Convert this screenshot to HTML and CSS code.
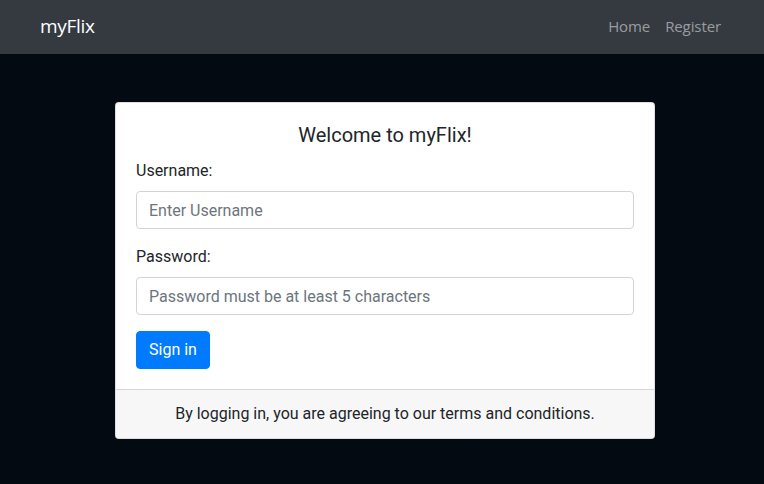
FILE: index.html
```html
<!DOCTYPE html>
<html lang="en">
<head>
<meta charset="utf-8">
<title>myFlix</title>
<link rel="stylesheet" href="styles.css">
</head>
<body>
<nav class="navbar">
  <a class="brand" href="#">myFlix</a>
  <div class="nav-links">
    <a href="#">Home</a>
    <a href="#">Register</a>
  </div>
</nav>
<main class="main">
  <div class="card">
    <form class="card-body">
      <h5 class="card-title">Welcome to myFlix!</h5>
      <div class="form-group">
        <label for="u">Username:</label>
        <input id="u" class="form-control" type="text" placeholder="Enter Username">
      </div>
      <div class="form-group">
        <label for="p">Password:</label>
        <input id="p" class="form-control" type="password" placeholder="Password must be at least 5 characters">
      </div>
      <button class="btn" type="button">Sign in</button>
    </form>
    <div class="card-footer">By logging in, you are agreeing to our terms and conditions.</div>
  </div>
</main>
</body>
</html>
```
FILE: styles.css
```css
* { box-sizing: border-box; }
html, body { margin: 0; height: 100%; }
body {
  background: #030a12;
  font-family: Roboto, "Liberation Sans", sans-serif;
  font-size: 16px;
  line-height: 1.5;
  color: #212529;
}
.navbar {
  height: 54px;
  background: #343a40;
  display: flex;
  align-items: center;
  justify-content: space-between;
  padding: 0 43px 2px 40px;
  font-family: "Open Sans", "Noto Sans", sans-serif;
}
.brand {
  color: #fff;
  text-decoration: none;
  font-size: 19px;
  letter-spacing: -0.3px;
}
.nav-links { display: flex; gap: 15px; }
.nav-links a {
  color: rgba(255,255,255,.5);
  text-decoration: none;
  font-size: 15px;
  letter-spacing: -0.1px;
}
.main { padding: 48px 0 0 115px; }
.card {
  width: 540px;
  background: #fff;
  border: 1px solid rgba(0,0,0,.125);
  border-radius: 4px;
  overflow: hidden;
}
.card-body { padding: 20px; margin: 0; }
.card-title {
  margin: 0 0 12px;
  font-size: 20px;
  font-weight: 400;
  line-height: 1.2;
  text-align: center;
}
.form-group { margin-bottom: 16px; }
label { display: block; margin-bottom: 8px; }
.form-control {
  display: block;
  width: 100%;
  height: 38px;
  padding: 6px 12px;
  font: inherit;
  color: #495057;
  border: 1px solid #ced4da;
  border-radius: 4px;
  background: #fff;
}
.form-control::placeholder { color: #6c757d; opacity: 1; }
.btn {
  font: inherit;
  color: #fff;
  background: #007bff;
  border: 1px solid #007bff;
  border-radius: 4px;
  padding: 6px 12px;
  height: 38px;
}
.card-footer {
  background: #f7f7f7;
  border-top: 1px solid rgba(0,0,0,.125);
  padding: 12px 20px;
  text-align: center;
}
```
